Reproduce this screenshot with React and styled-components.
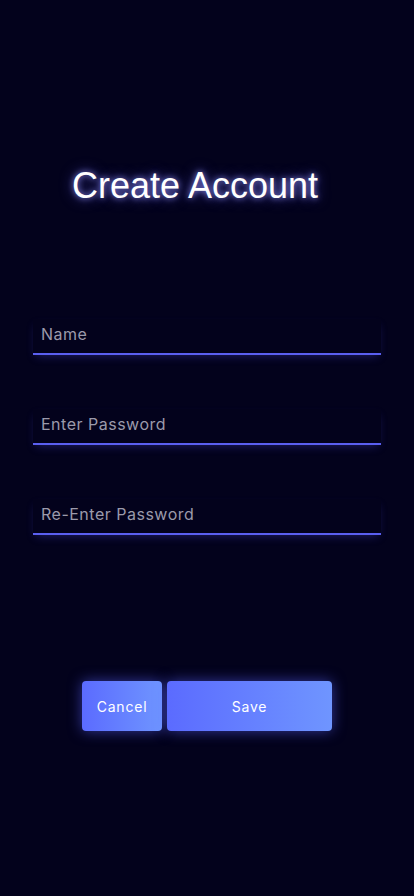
import React from 'react';
import styled, { createGlobalStyle } from 'styled-components';

const GlobalStyle = createGlobalStyle`
  html, body {
    margin: 0;
    padding: 0;
    background: #03021c;
  }
  * { box-sizing: border-box; }
`;

function App() {
  return (
    <Page>
      <GlobalStyle />
      <Title>Create Account</Title>
      <Form>
        <Field>
          <Input placeholder="Name" />
        </Field>
        <Field>
          <Input type="password" placeholder="Enter Password" />
        </Field>
        <Field>
          <Input type="password" placeholder="Re-Enter Password" />
        </Field>
      </Form>
      <ButtonRow>
        <Button $width={80}>Cancel</Button>
        <Button $width={165}>Save</Button>
      </ButtonRow>
    </Page>
  );
}

const Page = styled.div`
  width: 414px;
  min-height: 896px;
  background: #03021c;
  display: flex;
  flex-direction: column;
  align-items: center;
  padding-top: 164px;
`;

const Title = styled.h1`
  margin: 0 24px 0 0;
  font-family: 'Liberation Sans', Arial, sans-serif;
  font-weight: 400;
  font-size: 36px;
  line-height: 44px;
  color: #ffffff;
  text-shadow: 0 0 6px rgba(150, 150, 255, 0.9), 0 0 14px rgba(110, 110, 255, 0.6);
`;

const Form = styled.div`
  width: 348px;
  margin-top: 111px;
  display: flex;
  flex-direction: column;
  gap: 54px;
`;

const Field = styled.div`
  height: 36px;
  border-bottom: 2px solid #5a5ff0;
  box-shadow: 0 4px 10px -3px rgba(80, 80, 230, 0.35);
`;

const Input = styled.input`
  width: 100%;
  height: 28px;
  margin-top: 1px;
  background: transparent;
  border: none;
  outline: none;
  padding: 0 8px;
  font-family: Inter, 'Noto Sans', sans-serif;
  font-size: 16px;
  letter-spacing: 0.5px;
  color: #ffffff;
  &::placeholder {
    color: #9b9aab;
  }
`;

const ButtonRow = styled.div`
  margin-top: 146px;
  display: flex;
  gap: 5px;
`;

const Button = styled.button`
  width: ${(p) => p.$width}px;
  height: 50px;
  border: none;
  border-radius: 4px;
  background: linear-gradient(90deg, #5b6bff 0%, #6f95ff 100%);
  color: #ffffff;
  font-family: Inter, 'Noto Sans', sans-serif;
  font-size: 14px;
  letter-spacing: 0.8px;
  box-shadow: 0 0 14px rgba(90, 100, 255, 0.55);
  cursor: pointer;
`;

export default App;
